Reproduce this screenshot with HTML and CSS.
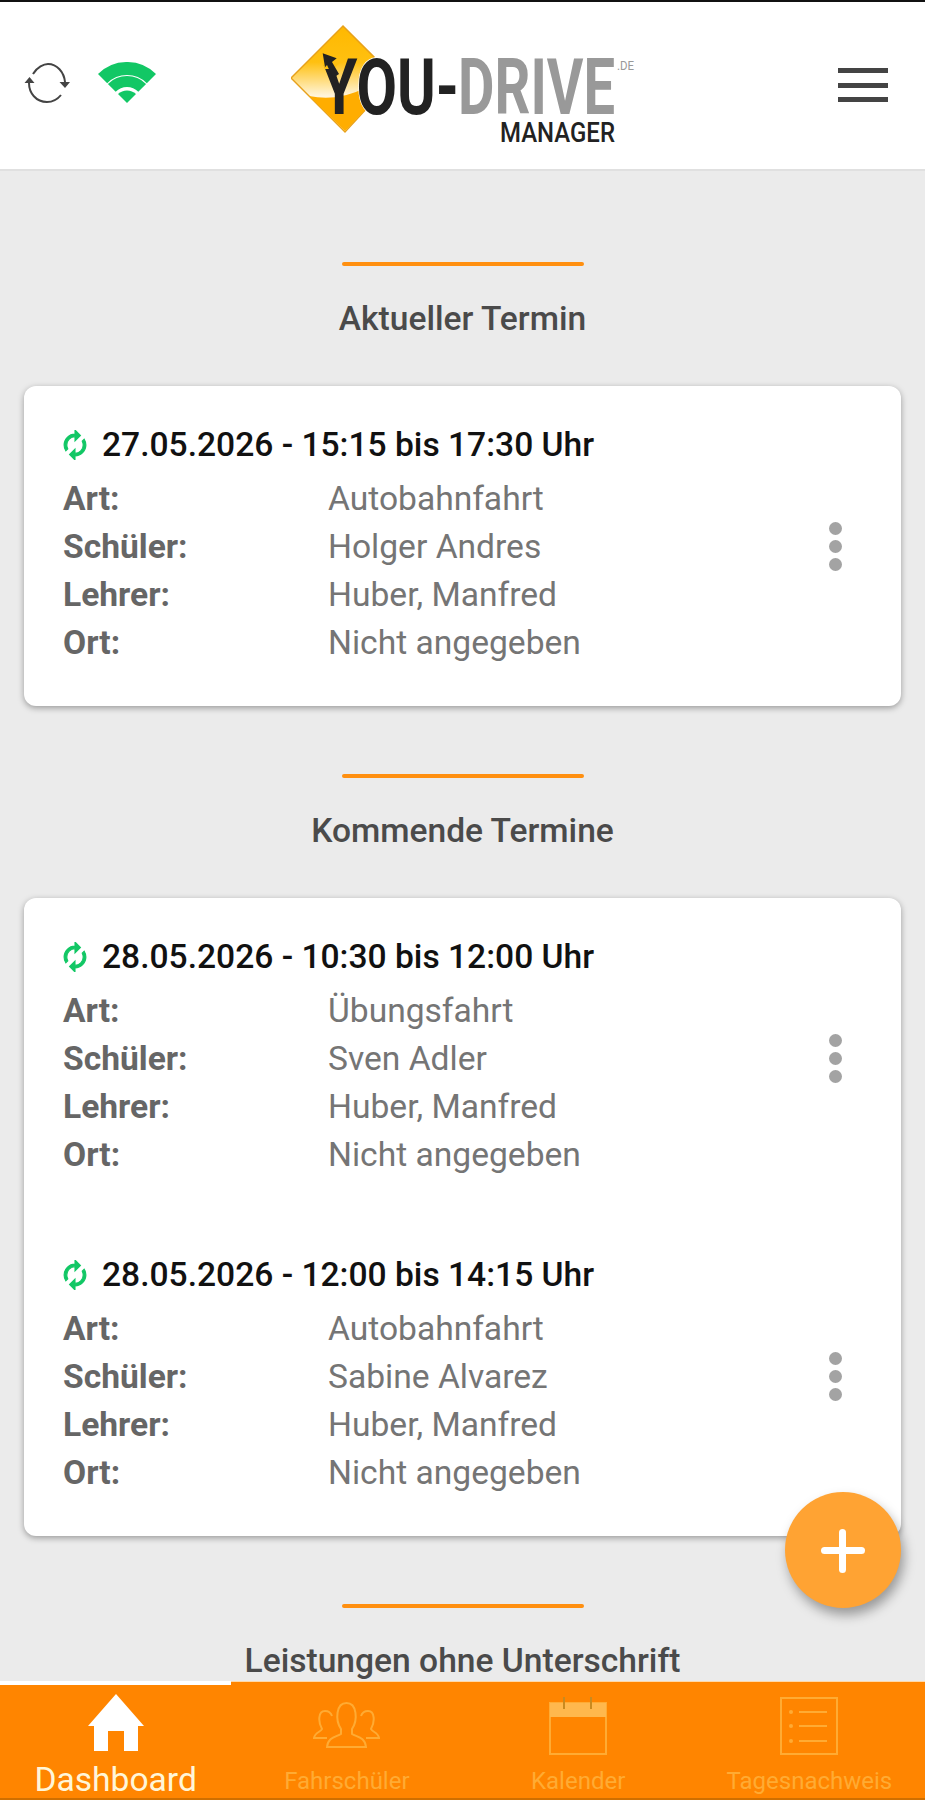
FILE: index.html
```html
<!DOCTYPE html>
<html lang="de">
<head>
    <meta charset="UTF-8">
    <meta name="viewport" content="width=device-width, initial-scale=1.0">
    <title>You-Drive Manager</title>
    <link rel="stylesheet" href="styles.css">
</head>
<body>

<div class="app">
    <header class="topbar">
        <div class="status">
            <svg class="sync-icon" viewBox="0 0 46 40">
                <path d="M9 11 C13 4 20 1 24 1 C33 1 40 9 41 19" fill="none" stroke="#444" stroke-width="2"/>
                <path d="M37 32 C33 37 28 39 23 39 C12 39 5 30 5 20" fill="none" stroke="#444" stroke-width="2"/>
                <path d="M0.500 20 L5.500 14 L10.500 20 Z M35.500 19 L46 19 L41 25 Z" fill="#444"/>
            </svg>
            <svg class="wifi-icon" viewBox="0 0 60 42">
                <path d="M5.600 16.600 A34.500 34.500 0 0 1 54.400 16.600" fill="none" stroke="#12c765" stroke-width="13"/>
                <path d="M14.800 25.800 A21.500 21.500 0 0 1 45.200 25.800" fill="none" stroke="#12c765" stroke-width="11"/>
                <path d="M30 41 L21 32 A13 13 0 0 1 39 32 Z" fill="#12c765"/>
            </svg>
        </div>

        <svg class="logo" viewBox="0 0 344 124">
            <defs>
                <linearGradient id="signFill" x1="0" y1="0" x2="0" y2="1">
                    <stop offset="0" stop-color="#ffb800"/>
                    <stop offset="0.34" stop-color="#ffc010"/>
                    <stop offset="0.66" stop-color="#fff5dc"/>
                </linearGradient>
            </defs>
            <path d="M52 2 L83 33 L75 50 L73 75 L78 82 L54 108 L0 54 Z" fill="url(#signFill)" stroke="#e7a11c" stroke-width="1.500"/>
            <path d="M18 72 Q46 78 74 64 L73 75 L78 82 L54 107 Z" fill="#ffad00"/>
            <text class="logo-word logo-dark" x="30" y="90" textLength="138" lengthAdjust="spacingAndGlyphs"><tspan class="logo-y">Y</tspan>OU-</text>
            <!-- the left arm of the Y turns into the arrow -->
            <path d="M28 33 L50 33 L50 38 L42 45 L34 45 Z" fill="#ffc010"/>
            <path d="M31.700 29.300 L45.700 34.300 L41 38 L48 50 L42 54 L36 41 L34 43.300 Z" fill="#222"/>
            <text class="logo-word logo-grey" x="167" y="90" textLength="157" lengthAdjust="spacingAndGlyphs">DRIVE</text>
            <text class="logo-de" x="326" y="46" textLength="17" lengthAdjust="spacingAndGlyphs">.DE</text>
            <text class="logo-sub" x="209" y="118" textLength="115" lengthAdjust="spacingAndGlyphs">MANAGER</text>
        </svg>

        <div class="burger">
            <span></span>
            <span></span>
            <span></span>
        </div>
    </header>

    <main class="content">
        <section class="block">
            <div class="rule"></div>
            <h2>Aktueller Termin</h2>
            <div class="card">
                <article class="termin">
                    <div class="termin-body">
                        <p class="termin-date">
                            <svg class="renew" viewBox="4 1 16 22"><path d="M12 6v3l4-4-4-4v3c-4.420 0-8 3.580-8 8 0 1.570.460 3.030 1.240 4.260L6.700 14.800c-.450-.830-.700-1.790-.700-2.800 0-3.310 2.690-6 6-6zm6.760 1.740L17.300 9.200c.440.840.700 1.790.700 2.800 0 3.310-2.690 6-6 6v-3l-4 4 4 4v-3c4.420 0 8-3.580 8-8 0-1.570-.460-3.030-1.240-4.260z"/></svg>
                            27.05.2026 - 15:15 bis 17:30 Uhr
                        </p>
                        <dl class="details">
                            <dt>Art:</dt><dd>Autobahnfahrt</dd>
                            <dt>Schüler:</dt><dd>Holger Andres</dd>
                            <dt>Lehrer:</dt><dd>Huber, Manfred</dd>
                            <dt>Ort:</dt><dd>Nicht angegeben</dd>
                        </dl>
                    </div>
                    <div class="kebab"><span></span><span></span><span></span></div>
                </article>
            </div>
        </section>

        <section class="block">
            <div class="rule"></div>
            <h2>Kommende Termine</h2>
            <div class="card">
                <article class="termin">
                    <div class="termin-body">
                        <p class="termin-date">
                            <svg class="renew" viewBox="4 1 16 22"><path d="M12 6v3l4-4-4-4v3c-4.420 0-8 3.580-8 8 0 1.570.460 3.030 1.240 4.260L6.700 14.800c-.450-.830-.700-1.790-.700-2.800 0-3.310 2.690-6 6-6zm6.760 1.740L17.300 9.200c.440.840.700 1.790.700 2.800 0 3.310-2.690 6-6 6v-3l-4 4 4 4v-3c4.420 0 8-3.580 8-8 0-1.570-.460-3.030-1.240-4.260z"/></svg>
                            28.05.2026 - 10:30 bis 12:00 Uhr
                        </p>
                        <dl class="details">
                            <dt>Art:</dt><dd>Übungsfahrt</dd>
                            <dt>Schüler:</dt><dd>Sven Adler</dd>
                            <dt>Lehrer:</dt><dd>Huber, Manfred</dd>
                            <dt>Ort:</dt><dd>Nicht angegeben</dd>
                        </dl>
                    </div>
                    <div class="kebab"><span></span><span></span><span></span></div>
                </article>
                <article class="termin">
                    <div class="termin-body">
                        <p class="termin-date">
                            <svg class="renew" viewBox="4 1 16 22"><path d="M12 6v3l4-4-4-4v3c-4.420 0-8 3.580-8 8 0 1.570.460 3.030 1.240 4.260L6.700 14.800c-.450-.830-.700-1.790-.700-2.800 0-3.310 2.690-6 6-6zm6.760 1.740L17.300 9.200c.440.840.700 1.790.700 2.800 0 3.310-2.690 6-6 6v-3l-4 4 4 4v-3c4.420 0 8-3.580 8-8 0-1.570-.460-3.030-1.240-4.260z"/></svg>
                            28.05.2026 - 12:00 bis 14:15 Uhr
                        </p>
                        <dl class="details">
                            <dt>Art:</dt><dd>Autobahnfahrt</dd>
                            <dt>Schüler:</dt><dd>Sabine Alvarez</dd>
                            <dt>Lehrer:</dt><dd>Huber, Manfred</dd>
                            <dt>Ort:</dt><dd>Nicht angegeben</dd>
                        </dl>
                    </div>
                    <div class="kebab"><span></span><span></span><span></span></div>
                </article>
            </div>
        </section>

        <section class="block">
            <div class="rule"></div>
            <h2>Leistungen ohne Unterschrift</h2>
        </section>
    </main>

    <button class="fab" type="button"><span class="fab-plus"></span></button>

    <nav class="tabbar">
        <a class="tab tab-active">
            <svg class="tab-icon" viewBox="0 0 56 58">
                <path d="M28 0 L56 32 L50 32 L50 57 L36 57 L36 37 L20 37 L20 57 L6 57 L6 32 L0 32 Z" fill="#fff"/>
            </svg>
            <span>Dashboard</span>
        </a>
        <a class="tab">
            <svg class="tab-icon tab-icon-wide" viewBox="0 0 67 58">
                <g fill="none" stroke="#ffab33" stroke-width="2">
                    <path d="M28 32 C22 23 23 6 33.500 6 C44 6 45 23 39 32 L39 37 C44 40 52 40 53 50 L14 50 C15 40 23 40 28 37 Z"/>
                    <path d="M14 41 L1 41 C2 35 8 35 9 32 C5 25 5 14 12 14 C16 14 18 16 19 19"/>
                    <path d="M53 41 L66 41 C65 35 59 35 58 32 C62 25 62 14 55 14 C51 14 49 16 48 19"/>
                </g>
            </svg>
            <span>Fahrschüler</span>
        </a>
        <a class="tab">
            <svg class="tab-icon" viewBox="0 0 58 58">
                <rect x="1" y="6" width="56" height="51" fill="none" stroke="#ffab33" stroke-width="2"/>
                <rect x="1" y="6" width="56" height="14" fill="#ffb84d"/>
                <path d="M15 0 L15 12 M42 0 L42 12" stroke="#c98a1f" stroke-width="2"/>
            </svg>
            <span>Kalender</span>
        </a>
        <a class="tab">
            <svg class="tab-icon" viewBox="0 0 58 58">
                <rect x="1" y="1" width="56" height="56" fill="none" stroke="#ffab33" stroke-width="2"/>
                <path d="M19 15 L47 15 M19 29 L47 29 M19 44 L47 44" stroke="#ffab33" stroke-width="2"/>
                <circle cx="11" cy="15" r="2" fill="#ffab33"/>
                <circle cx="11" cy="29" r="2" fill="#ffab33"/>
                <circle cx="11" cy="44" r="2" fill="#ffab33"/>
            </svg>
            <span>Tagesnachweis</span>
        </a>
    </nav>
</div>

</body>
</html>
```

FILE: styles.css
```css
* {
    box-sizing: border-box;
}
body {
    margin: 0;
    font-family: Roboto, "Liberation Sans", sans-serif;
    background: #ebebeb;
}
.app {
    position: relative;
    display: flex;
    flex-direction: column;
    height: 1800px;
    overflow: hidden;
}

/* header */
.topbar {
    position: relative;
    flex: none;
    height: 171px;
    display: flex;
    justify-content: space-between;
    align-items: flex-start;
    padding: 0 37px 0 24px;
    background: white;
    border-top: 2px solid #111;
    border-bottom: 2px solid #e0e0e0;
}
.status {
    display: flex;
    align-items: flex-start;
    gap: 27px;
    padding-top: 59px;
}
.sync-icon {
    width: 46px;
    height: 40px;
    margin-top: 2px;
}
.wifi-icon {
    width: 60px;
    height: 42px;
    margin-top: 1px;
}
.logo {
    position: absolute;
    left: 291px;
    top: 22px;
    width: 344px;
    height: 124px;
}
.logo-word {
    font-family: Roboto, sans-serif;
    font-weight: 700;
    font-size: 78px;
}
.logo-dark {
    fill: #222;
    stroke: white;
    stroke-width: 1.5px;
    paint-order: stroke;
}
.logo-y {
    stroke: none;
}
.logo-grey {
    fill: #999;
}
.logo-de {
    font-family: Roboto, sans-serif;
    font-size: 12px;
    fill: #999;
}
.logo-sub {
    font-family: Roboto, sans-serif;
    font-weight: 500;
    font-size: 27px;
    fill: #222;
}
.burger {
    display: flex;
    flex-direction: column;
    gap: 9.5px;
    padding-top: 66px;
}
.burger span {
    display: block;
    width: 50px;
    height: 5px;
    background: #444;
}

/* content */
.content {
    flex: 1;
    min-height: 0;
    overflow: hidden;
    padding: 91px 24px 0;
}
.block {
    margin-bottom: 68px;
}
.rule {
    width: 242px;
    height: 4px;
    margin: 0 auto;
    border-radius: 2px;
    background: #ff8f0f;
}
h2 {
    margin: 35px 0 49px;
    font-size: 33.6px;
    line-height: 36px;
    font-weight: 500;
    text-align: center;
    color: #4a4a4a;
}
.card {
    display: flex;
    flex-direction: column;
    gap: 76px;
    padding: 39px 39px 39px;
    background: white;
    border-radius: 12px;
    box-shadow: 0 2px 6px rgba(0, 0, 0, 0.35);
}
.termin {
    display: flex;
    align-items: center;
    justify-content: space-between;
}
.termin-date {
    display: flex;
    align-items: center;
    margin: 0 0 10px;
    font-size: 33.6px;
    line-height: 40px;
    font-weight: 500;
    color: #111;
}
.renew {
    width: 24px;
    height: 30px;
    margin-right: 15px;
    fill: #12c765;
    stroke: #12c765;
    stroke-width: 0.8px;
}
.details {
    display: grid;
    grid-template-columns: 265px 1fr;
    margin: 0;
    font-size: 33.6px;
    line-height: 48px;
}
.details dt {
    font-weight: 700;
    color: #666;
}
.details dd {
    margin: 0;
    color: #757575;
}
.kebab {
    display: flex;
    flex-direction: column;
    gap: 5px;
    margin-right: 20px;
}
.kebab span {
    display: block;
    width: 13px;
    height: 13px;
    border-radius: 50%;
    background: #a3a3a3;
}

/* plus button */
.fab {
    position: absolute;
    left: 785px;
    top: 1492px;
    display: flex;
    align-items: center;
    justify-content: center;
    width: 116px;
    height: 116px;
    padding: 0;
    border: none;
    border-radius: 50%;
    background: #ffa333;
    box-shadow: 3px 7px 12px rgba(0, 0, 0, 0.35);
}
.fab-plus {
    position: relative;
    display: block;
    width: 44px;
    height: 7px;
    border-radius: 4px;
    background: white;
}
.fab-plus::after {
    content: "";
    position: absolute;
    left: 18px;
    top: -18px;
    width: 7px;
    height: 44px;
    border-radius: 4px;
    background: white;
}

/* bottom tabs */
.tabbar {
    flex: none;
    height: 119px;
    display: grid;
    grid-template-columns: repeat(4, 1fr);
    background: #ff8500;
    border-top: 1px solid #ffd9a8;
    border-bottom: 2px solid #cf6f00;
}
.tab {
    display: flex;
    flex-direction: column;
    align-items: center;
    justify-content: flex-end;
    height: 116px;
    padding-bottom: 2px;
    font-size: 24px;
    line-height: 30px;
    color: #ffab33;
}
.tab-active {
    margin-top: -1px;
    height: 117px;
    border-top: 4px solid white;
    padding-bottom: 0;
    font-size: 33.6px;
    line-height: 36px;
    color: #fff6d8;
}
.tab-icon {
    width: 58px;
    height: 58px;
    margin-bottom: 11px;
}
.tab-icon-wide {
    width: 67px;
}
.tab-active .tab-icon {
    width: 56px;
    margin-bottom: 10px;
}
```
